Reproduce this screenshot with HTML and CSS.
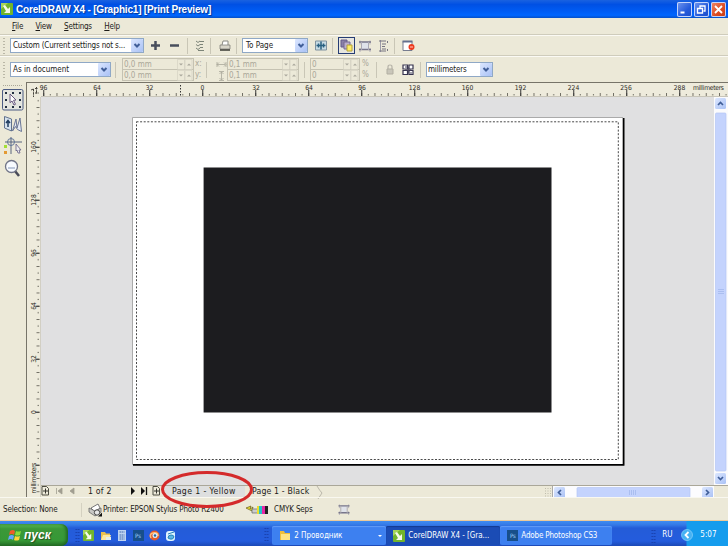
FILE: index.html
```html
<!DOCTYPE html>
<html lang="en">
<head>
<meta charset="utf-8">
<title>CorelDRAW X4 - [Graphic1] [Print Preview]</title>
<link rel="stylesheet" href="styles.css">
</head>
<body>
<svg width="0" height="0" class="defs">
  <defs>
    <linearGradient id="arrowBg" x1="0" y1="0" x2="1" y2="1"><stop offset="0" stop-color="#dce7ff"/><stop offset="1" stop-color="#a9c1f5"/></linearGradient>
    <symbol id="corel" viewBox="0 0 12 12"><rect width="12" height="12" rx="1" fill="#72b52c"/><path d="M0 0h7L0 6z" fill="#a6d45c"/><path d="M2 3l2-1 3 4 2-2v6H3l2-2z" fill="#f4faea"/></symbol>
    <symbol id="down" viewBox="0 0 12 13"><rect width="12" height="13" rx="1" fill="url(#arrowBg)"/><path d="M3.500 5l2.500 2.500L8.500 5" fill="none" stroke="#405e98" stroke-width="2"/></symbol>
    <symbol id="spin" viewBox="0 0 16 22"><g fill="#ece9d8" stroke="#d2cfc0" stroke-width=".6"><path d="M.5.5h7v10h-7zM8 .5h7v10H8zM.5 11.500h7v10h-7zM8 11.500h7v10H8z"/></g><path d="M2 4.500h4l-2 2zM10 6.500h4l-2-2zM2 15.500h4l-2 2zM10 17.500h4l-2-2z" fill="#aaa79c"/></symbol>
    <symbol id="frame" viewBox="0 0 12 12"><path d="M3 2h6v8H3z" fill="#dfe2ea"/><path d="M1 .5v4M11 .5v4M1 8v4M11 8v4" stroke="#b5b2ba" fill="none"/><path d="M0 2h12M0 9.500h12" stroke="#77758a" stroke-width="1.500" fill="none"/><path d="M2.500 2v8M9.500 2v8" stroke="#aaa8b4" fill="none"/></symbol>
    <symbol id="pageplus" viewBox="0 0 8 10"><path d="M.5.5h4.500l2 2v6.500H.5z" fill="#efecdc" stroke="#4c4c42"/><path d="M4 2.500v5M1.500 5h5" stroke="#34342e"/></symbol>
    <pattern id="tx" x="43.250" y="0" width="13.250" height="14" patternUnits="userSpaceOnUse"><path d="M.5 10v3M7 11v1.500" stroke="#4f4d44" stroke-width=".8"/></pattern>
    <pattern id="txm" x="43.250" y="0" width="53" height="14" patternUnits="userSpaceOnUse"><path d="M.5 7v6" stroke="#333"/></pattern>
    <pattern id="ty" x="0" y="49.750" width="14" height="13.250" patternUnits="userSpaceOnUse"><path d="M9.500 .5h3M10.500 7h1.500" stroke="#4f4d44" stroke-width=".8"/></pattern>
    <pattern id="tym" x="0" y="49.750" width="14" height="53" patternUnits="userSpaceOnUse"><path d="M8.500 .5h4" stroke="#333"/></pattern>
  </defs>
</svg>

<header class="titlebar">
  <svg width="12" height="12"><use href="#corel"/></svg>
  <h1>CorelDRAW X4 - [Graphic1] [Print Preview]</h1>
  <svg class="wbtn" width="15" height="15"><path d="M3.500 10.500h4" stroke="#fff" stroke-width="2"/></svg>
  <svg class="wbtn" width="15" height="15"><path d="M6 6V4h5v5H9.500M3.500 6.500h5v4.500h-5z" stroke="#fff" fill="none" stroke-width="1.300"/></svg>
  <svg class="wbtn close" width="15" height="15"><path d="M4 4l7 7M11 4l-7 7" stroke="#fff" stroke-width="1.800"/></svg>
</header>

<nav class="menu"><span><u>F</u>ile</span><span><u>V</u>iew</span><span><u>S</u>ettings</span><span><u>H</u>elp</span></nav>

<div class="bar bar1">
  <i class="grip"></i>
  <div class="combo"><span class="tight">Custom (Current settings not s...</span><svg width="12" height="13"><use href="#down"/></svg></div>
  <svg width="11" height="11"><path d="M5.500 1v9M1 5.500h9" stroke="#484e5c" stroke-width="2.500"/></svg>
  <svg width="11" height="11"><path d="M1 5.500h9" stroke="#484e5c" stroke-width="2.500"/></svg>
  <i class="sep"></i>
  <svg width="11" height="12"><path d="M1 1l2 1.500L5 1M1 4.500L3 6l2-1.500M1 8l2 1.500L5 8M5 1.500h4M5 4.500h3M5 7.500h3M3 10.500h6" stroke="#7c8478" fill="none"/></svg>
  <i class="sep"></i>
  <svg width="12" height="12"><path d="M3 5l1-4h5v4" fill="#fff" stroke="#8b8b86"/><path d="M1 5h10v4H1z" fill="#d8d5c9" stroke="#777770" stroke-width=".7"/><path d="M1 10h10" stroke="#44443e" stroke-width="1.600"/></svg>
  <i class="sep"></i>
  <div class="combo"><span>To Page</span><svg width="12" height="13"><use href="#down"/></svg></div>
  <svg width="12" height="11"><path d="M.5 1h11v9H.5z" fill="#c8dce4" stroke="#7f929f"/><path d="M1.500 5.500h9M6 1.500v8M3.500 3.500v4M8.500 3.500v4" stroke="#286080" stroke-width="1.500"/></svg>
  <i class="sep"></i>
  <svg class="active" width="17" height="17"><rect x=".5" y=".5" width="16" height="16" fill="#e7e6df" stroke="#263d75"/><path d="M3 3h6v7H3z" fill="#8a80a8" stroke="#655b8a"/><path d="M6 5h6v7H6z" fill="#bcaecd" stroke="#756991"/><path d="M9 8h5v6H9z" fill="#ffed67" stroke="#b3a036"/></svg>
  <svg width="12" height="12"><use href="#frame"/></svg>
  <svg width="10" height="12"><path d="M1.500 0v12" stroke="#9d9ba8"/><path d="M0 1h7M0 11h7M3 4h4M3 6.500h3M3 9h4M8.500 1v2M8.500 9v2" stroke="#777581" fill="none"/></svg>
  <i class="sep"></i>
  <svg width="13" height="12"><path d="M1 1.500h9v9H1z" fill="#fff" stroke="#777d90"/><path d="M.5 1.500h10" stroke="#64708f" stroke-width="2"/><circle cx="9.500" cy="7" r="3" fill="#ed3b20"/><path d="M8 7h3" stroke="#ffd0c4"/></svg>
</div>

<div class="bar bar2">
  <i class="grip"></i>
  <div class="combo"><span>As in document</span><svg width="12" height="13"><use href="#down"/></svg></div>
  <i class="sep"></i>
  <div class="pair"><span>0,0 mm</span><span>0,0 mm</span><svg width="16" height="22"><use href="#spin"/></svg></div>
  <div class="lbl"><span>x:</span><span>y:</span></div>
  <i class="sep"></i>
  <svg width="11" height="22"><path d="M1 5.500h8M3 3.500l-2 2 2 2M8 3.500l2 2-2 2M1 3v5M10 3v5M5.500 13v8M3.500 15l2-2 2 2M3.500 19l2 2 2-2M3 12.500h5M3 21.500h5" stroke="#aaa79a" fill="none" stroke-width=".8"/></svg>
  <div class="pair"><span>0,1 mm</span><span>0,1 mm</span><svg width="16" height="22"><use href="#spin"/></svg></div>
  <i class="sep"></i>
  <div class="pair"><span>0</span><span>0</span><svg width="16" height="22"><use href="#spin"/></svg></div>
  <div class="lbl"><span>%</span><span>%</span></div>
  <i class="sep"></i>
  <svg width="8" height="11"><path d="M2 5V3q0-2 2-2t2 2v2" fill="none" stroke="#b7b4a9" stroke-width="1.200"/><path d="M1 5h6v5H1z" fill="#c9c6ba" stroke="#b2afa2"/></svg>
  <svg width="12" height="12"><path d="M1 1h4.500v4H1zM7 1h4v4H7zM1 6.500h4.500v4H1zM7 6.500h4v4H7z" fill="#fff" stroke="#35334e" stroke-width="1.200"/><path d="M3 6h6M6.200 3v6M3 3h2M8 9h2" fill="none" stroke="#45425a"/></svg>
  <i class="sep"></i>
  <div class="combo"><span class="tight">millimeters</span><svg width="12" height="13"><use href="#down"/></svg></div>
</div>

<main class="work">
  <aside class="tools">
    <svg width="26" height="95">
      <path d="M3 3.500h20" stroke="#aaa797" stroke-dasharray="1 1"/>
      <rect x="2.500" y="7.500" width="20.500" height="20.500" rx="1.500" fill="#e4e5e0" stroke="#4c5c84"/>
      <path d="M5 11h2m5 0h2m5 0h2M5 18h2m12 0h2M5 25h2m5 0h2m5 0h2" stroke="#222f42" stroke-width="2"/>
      <path d="M10 12l6 6-2.500.3 2 4-1.500.7-2-4-2 1.700z" fill="#fff" stroke="#68577f"/>
      <path d="M4.500 34.500l7 2.500v12l-7-3z" fill="#d6e2ee" stroke="#60718c"/>
      <path d="M12.500 49l3.500-12 1 9 3-10 1.500 13.500-4-2-2-3z" fill="#e4eaf4" stroke="#6a7696"/>
      <path d="M8 45v-6M6 41l2-2.500 2 2.500" stroke="#213e60" fill="none" stroke-width="1.500"/>
      <path d="M5 60h17M11 55v17" stroke="#59657e"/><circle cx="11" cy="60" r="3.500" fill="none" stroke="#63789a"/>
      <path d="M4 63h3v3H4z" fill="#a2df35"/><path d="M4 69h3v3H4z" fill="#e39a34"/><path d="M16 62l5 6-2 0 1 3-2 0-1-3-1 1z" fill="#eee" stroke="#655e87" stroke-width=".8"/>
      <path d="M15 89l4 5" stroke="#484a58" stroke-width="2.500"/><circle cx="11.500" cy="84.500" r="6" fill="#f7faff" stroke="#707487" stroke-width="1.300"/><path d="M8 86h7" stroke="#bdc8db" stroke-width="2"/>
    </svg>
  </aside>
  <div class="editor">
    <svg class="hruler" width="701" height="14" viewBox="27 0 701 14">
      <path d="M41 0h687v14H41z" fill="url(#tx)"/><path d="M41 0h687v14H41z" fill="url(#txm)"/>
      <path d="M41 13.500h687" stroke="#c8c5b9"/>
      <path d="M180.500 2v11" stroke="#333" stroke-dasharray="1.500 1.500"/>
      <path d="M33.500 15V6M36.500 4v7M31 14.500h5M31 7l2.500-1M35 10h4M35 5.500h3" stroke="#44423b" stroke-dasharray="2.500 .8"/>
      <g class="ticktext"><text x="43.500" y="7">96</text><text x="97" y="7">64</text><text x="149.500" y="7">32</text><text x="202.500" y="7">0</text><text x="256" y="7">32</text><text x="309" y="7">64</text><text x="362" y="7">96</text><text x="414.500" y="7">128</text><text x="467.500" y="7">160</text><text x="520.500" y="7">192</text><text x="573.500" y="7">224</text><text x="626" y="7">256</text><text x="679.500" y="7">288</text><text x="708.500" y="7" textLength="31">millimeters</text></g>
    </svg>
    <div class="stage">
      <svg class="vruler" width="14" height="400" viewBox="0 0 14 400">
        <path d="M0 0h14v400H0z" fill="url(#ty)"/><path d="M0 0h14v400H0z" fill="url(#tym)"/><path d="M13.500 0v400" stroke="#d2cfc3"/>
        <g class="ticktext"><text transform="translate(8.500 50)rotate(-90)">160</text><text transform="translate(8.500 103)rotate(-90)">128</text><text transform="translate(8.500 156)rotate(-90)">96</text><text transform="translate(8.500 209)rotate(-90)">64</text><text transform="translate(8.500 262)rotate(-90)">32</text><text transform="translate(8.500 315)rotate(-90)">0</text><text transform="translate(8.500 381)rotate(-90)" textLength="31">millimeters</text></g>
      </svg>
      <svg class="canvas" width="673" height="388" viewBox="41 97 673 388">
        <path d="M132.500 465V117.500H623" fill="none" stroke="#aaa"/>
        <path d="M133 118h490v347H133z" fill="#fff"/>
        <path d="M623.600 118v347.300M133 464.900h491.400" stroke="#000" stroke-width="1.800"/>
        <rect x="136.500" y="121.800" width="481.800" height="337.700" fill="none" stroke="#333" stroke-width=".9" stroke-dasharray="2 1.600"/>
        <path d="M203.600 167.600h347.900v244.900H203.600z" fill="#1c1c1f"/>
      </svg>
      <svg class="vscroll" width="14" height="388">
        <rect width="14" height="388" fill="#fbfbfd"/>
        <rect x="1" y="1" width="11" height="11" rx="1.500" fill="url(#arrowBg)"/><path d="M4 8l2.500-2.500L9 8" fill="none" stroke="#405e98" stroke-width="1.700"/>
        <rect x="1.500" y="16" width="10.500" height="358" rx="1" fill="#c4d3fd" stroke="#b4c6f3" stroke-width=".7"/>
        <path d="M4 192.500h6M4 194.500h6M4 196.500h6" stroke="#9fb5ea" stroke-width=".7"/>
        <rect x="1" y="376" width="11" height="11" rx="1.500" fill="url(#arrowBg)"/><path d="M4 380l2.500 2.500L9 380" fill="none" stroke="#405e98" stroke-width="1.700"/>
      </svg>
      <div class="pages">
        <svg width="9" height="10"><use href="#pageplus"/></svg>
        <svg class="nav" width="28" height="8"><path d="M6.500 1v6M12 1v6L8 4zM24 1v6l-4-3z" fill="#a19e91" stroke="#a19e91" stroke-width=".8"/></svg>
        <span class="count">1 of 2</span>
        <svg class="nav" width="26" height="8"><path d="M5 0v8l4-4zM15 0v8l4-4z" fill="#111"/><path d="M20.500 0v8" stroke="#111" stroke-width="1.300"/></svg>
        <svg width="9" height="10"><use href="#pageplus"/></svg>
        <div class="tab yellow"><span>Page 1 - Yellow</span>
          <svg class="ring" width="96" height="39"><ellipse cx="48" cy="19.500" rx="44.500" ry="17" fill="none" stroke="#d42a2b" stroke-width="3"/></svg>
        </div>
        <div class="tab"><span>Page 1 - Black</span></div>
        <svg class="slant" width="10" height="13"><path d="M1 0q3 5 5 7l-4 6" fill="none" stroke="#bab7aa"/></svg>
        <svg class="hscroll" width="177" height="13" viewBox="-8 0 177 13">
          <path d="M-6.500 2v9M-4 2v9M-1.500 2v9" stroke="#bfbcac" stroke-dasharray="1 1.500"/>
          <rect width="162" height="12" fill="#fcfcfe"/><path d="M.5 0v12" stroke="#aaa"/>
          <rect x="2" y="1" width="11" height="11" rx="1.500" fill="url(#arrowBg)"/><path d="M9 4L6.500 6.500 9 9" fill="none" stroke="#405e98" stroke-width="1.700"/>
          <rect x="25" y="1.500" width="113" height="10" rx="1" fill="#c4d3fd" stroke="#b4c6f3" stroke-width=".7"/>
          <path d="M77.500 4v5M79.500 4v5M81.500 4v5M83.500 4v5" stroke="#9fb5ea" stroke-width=".7"/>
          <rect x="150" y="1" width="11" height="11" rx="1.500" fill="url(#arrowBg)"/><path d="M154 4l2.500 2.500L154 9" fill="none" stroke="#405e98" stroke-width="1.700"/>
        </svg>
      </div>
    </div>
  </div>
</main>

<footer class="status">
  <span>Selection: None</span><i></i>
  <svg width="15" height="14"><path d="M3 5l7-4 2 4-5 4z" fill="#fff" stroke="#777"/><path d="M1 5l6 3 6-3v4l-6 4-6-4z" fill="#c8c8c5" stroke="#666" stroke-width=".8"/><circle cx="9" cy="9.500" r="2.700" fill="#e6e6e6" stroke="#444"/><path d="M14 9.500v4h-4z" fill="#111"/></svg>
  <span class="printer">Printer: EPSON Stylus Photo R2400</span>
  <svg width="24" height="10"><path d="M1 3l5-2-1 3 3-2-1 4z" fill="#eadd35" stroke="#665b20" stroke-width=".7"/><path d="M7 4h6v4H7z" fill="#ccc" stroke="#666" stroke-width=".7"/><path d="M12 1h3v8h-3z" fill="#eede28"/><path d="M14 1h3v8h-3z" fill="#22c4cd"/><path d="M17 1h3v8h-3z" fill="#e829a5"/><path d="M20 1h3v8h-3z" fill="#222"/></svg>
  <span class="cmyk">CMYK Seps</span>
  <svg width="12" height="11"><use href="#frame"/></svg>
</footer>

<footer class="taskbar">
  <div class="start"><svg width="13" height="13"><path d="M2 2q3-2 5 0L6 6Q4 4 1 6z" fill="#f15b2a"/><path d="M8 2q2 1 5 0l-1 4q-3 1-5 0z" fill="#8bdc3d"/><path d="M1 7q3-2 5 0l-1 4q-2-2-5 0z" fill="#65a5ff"/><path d="M7 7q2 1 5 0l-1 4q-3 1-5 0z" fill="#ffd43a"/></svg><b>пуск</b></div>
  <div class="quick">
    <i class="dots"></i>
    <svg width="11" height="11"><use href="#corel"/></svg>
    <svg width="11" height="11"><path d="M1 2h4l1 1.500h4V10H1z" fill="#edc14f"/><path d="M3 5h8l-2 5H1z" fill="#ffe9a0"/><path d="M6 7h5v3H6z" fill="#e5eeee"/></svg>
    <svg width="11" height="11"><path d="M2 0h8v11H2z" fill="#bed3f1"/><path d="M3.500 2h5M3.500 5h5M3.500 7h5M3.500 9h5" stroke="#446dae" stroke-dasharray="1.500 .5"/></svg>
    <div class="ps">Ps</div>
    <svg width="11" height="11"><circle cx="5.500" cy="5.500" r="5" fill="#e55b28"/><path d="M2 8Q0 4 4 3q5-1 5 3" fill="none" stroke="#ffc17a" stroke-width="1.500"/><circle cx="6" cy="5.500" r="2.500" fill="#d8edff"/><circle cx="6" cy="5.500" r="1.200" fill="#23659b"/></svg>
    <svg width="11" height="11"><rect x="1" y="1" width="9" height="10" rx="3" fill="#dff4ff"/><path d="M3 4l6-2M3 8q0-3 3-3t3 2q-1 3-4 2z" fill="#5bb5e4" stroke="#2783b9"/></svg>
  </div>
  <i class="dots"></i>
  <div class="task t1"><svg width="12" height="11"><path d="M1 1h4l1 2h5v7H1z" fill="#efbe3c"/><path d="M2 4h9v6H2z" fill="#ffe382"/></svg><span>2 Проводник</span><em></em></div>
  <div class="task t2"><svg width="12" height="12"><use href="#corel"/></svg><span>CorelDRAW X4 - [Gra...</span></div>
  <div class="task t3"><div class="ps">Ps</div><span>Adobe Photoshop CS3</span></div>
  <i class="dots"></i>
  <span class="lang">RU</span>
  <div class="tray"><svg width="12" height="12"><circle cx="6" cy="6" r="5.500" fill="#46b2f3" stroke="#8bd4fc" stroke-width=".7"/><path d="M7.500 3L4.500 6l3 3" fill="none" stroke="#fff" stroke-width="1.800"/></svg><span>5:07</span></div>
</footer>
</body>
</html>
```
FILE: styles.css
```css
* { box-sizing: border-box; }
body { margin: 0; width: 728px; height: 546px; overflow: hidden; background: #ece9d8; color: #1c1b18; font: 8px/10px "DejaVu Sans Condensed", "DejaVu Sans", sans-serif; display: flex; flex-direction: column; }
svg { display: block; flex: none; }
span { white-space: nowrap; }
i, em { flex: none; }
.defs { position: absolute; }

.titlebar { height: 18px; flex: none; display: flex; align-items: center; gap: 2px; padding: 0 2px 0 1px; background: linear-gradient(#1a62e0, #0050e4 25%, #005df5 65%, #0066ff 85%, #0650c8); }
.titlebar h1 { margin: 0 auto 0 1px; padding-top: 1px; color: #fff; font: bold 10px/17px "Liberation Sans", Arial, sans-serif; letter-spacing: -.19px; text-shadow: 1px 1px 1px #063896; }
.wbtn { border-radius: 2px; background: linear-gradient(135deg, #7398ef, #245adb 60%, #1d4dc6); box-shadow: inset 0 0 0 1px #c4d5fb; }
.wbtn.close { background: linear-gradient(135deg, #ee8a6c, #dc4a20 60%, #c43c14); }

.menu { height: 17px; flex: none; display: flex; align-items: center; gap: 12.400px; padding: 2px 0 0 12px; border-bottom: 1px solid #cfccbc; letter-spacing: -.22px; }
.menu u { text-underline-offset: 1px; text-decoration-thickness: .7px; }

.bar { display: grid; align-items: center; flex: none; border-top: 1px solid #fbfaf4; }
.bar1 { height: 21px; border-bottom: 1px solid #cfccbc; grid-template-columns: 10px 140px 19px 18px 8px 15px 9px 17px 7px 72px 17px 6px 21px 20px 15px 8px 13px; }
.bar2 { height: 26px; grid-template-columns: 10px 105px 7px 72px 12px 10px 11px 77px 6px 51px 15px 10px 16px 18px 6px 68px; }
.grip { width: 2px; height: 16px; margin-left: 3px; background: repeating-linear-gradient(#bab7a7 0 1px, transparent 1px 3px); }
.sep { width: 1px; height: 16px; background: #c9c6b6; }
.combo { height: 15px; display: flex; align-items: center; justify-content: space-between; background: #fff; border: 1px solid #8fa8c6; padding-left: 2px; }
.combo span { padding-top: 1px; }
.bar1 .combo { width: 134px; }
.bar1 .combo ~ .combo { width: 66px; padding-left: 3px; margin-left: -1px; }
.bar2 .combo { width: 101px; }
.bar2 .combo:last-child { width: 67px; padding-left: 1px; }
.tight { letter-spacing: -.17px; }
.pair { width: 72px; height: 23px; display: grid; grid-template: 1fr 1fr / 1fr 16px; border: 1px solid #c5c2b2; background: linear-gradient(#c5c2b2, #c5c2b2) 0 50% / 100% 1px no-repeat; color: #aaa799; align-items: center; padding-left: 1px; }
.pair svg { grid-area: 1 / 2 / 3 / 3; }
.pair span:nth-child(2) { grid-row: 2; }
.sep + .pair:nth-child(10) { width: 50px; }
.lbl { display: grid; grid-template-rows: 11px 11px; color: #aaa799; padding-left: 1px; }

.work { display: flex; height: 415px; flex: none; }
.tools { width: 26px; }
.editor { flex: 1; border-top: 1px solid #777469; border-left: 1px solid #777469; }
.hruler { background: #eeebdc; overflow: visible; }
.ticktext { font-size: 6.700px; fill: #292821; text-anchor: middle; }
.stage { display: grid; grid-template: 388px 12px / 14px 673px 14px; }
.vruler { grid-row: 1 / 3; background: #eeebdc; }
.canvas { background: #e0e0e1; }
.pages { grid-column: 2 / 4; display: flex; align-items: flex-start; border-top: 1px solid #aaa799; height: 12px; font-size: 8.700px; line-height: 11px; }
.nav { margin-top: 1px; }
.count { width: 38px; margin-left: 10px; letter-spacing: .2px; }
.tab { position: relative; height: 11px; line-height: 11px; padding: 0 7px; letter-spacing: .15px; }
.yellow { margin-left: 3px; background: #dedfdf; padding-left: 8px; width: 81px; letter-spacing: .38px; }
.ring { position: absolute; left: -5px; top: -16px; z-index: 2; }
.hscroll { margin-left: auto; margin-right: 7px; }

.status { height: 24px; flex: none; display: flex; align-items: center; padding: 1px 0 0 3px; border-top: 1px solid #f9f8f0; border-bottom: 1px solid #eac99b; letter-spacing: -.15px; }
.status > span { padding-top: 1px; }
.status > span:first-child { width: 78px; }
.status i { width: 1px; height: 14px; background: #d4d1c1; margin-right: 6px; }
.printer { width: 142px; }
.cmyk { width: 64px; margin-left: 5px; }

.taskbar { height: 25px; flex: none; display: flex; align-items: center; color: #fff; background: linear-gradient(#3f8cf1 0, #3478e6 4px, #245cd8 7px, #245cdd 80%, #1c49b6); }
.start { width: 68px; height: 22px; align-self: flex-end; display: flex; align-items: center; gap: 3px; padding-left: 8px; border-radius: 0 7px 7px 0; background: linear-gradient(#5dba54, #3b9838 22%, #369836 75%, #246c25); box-shadow: inset -2px 0 3px #216821; }
.start b { font: italic bold 12px/20px "Liberation Sans", Arial, sans-serif; text-shadow: 1px 1px 1px #244d20; }
.dots { width: 5px; height: 14px; background: radial-gradient(circle, #173fab 40%, transparent 45%) 0 0 / 2.500px 3px; }
.quick { display: flex; align-items: center; gap: 5.400px; margin: 3px 88px 0 7px; }
.quick .dots { margin-right: -2px; }
.ps { width: 11px; height: 11px; background: #174f8a; color: #a5d4ff; font-size: 6px; line-height: 11px; text-align: center; }
.task { height: 19px; margin-top: 4px; display: flex; align-items: center; gap: 3px; padding-left: 7px; border-radius: 2px; background: #3d80f0; box-shadow: inset 0 1px 1px #619bf7; letter-spacing: -.05px; }
.t1 { width: 114px; margin-left: 3px; }
.t1 em { margin-left: auto; margin-right: 4px; border: 2px solid transparent; border-top-color: #fff; border-bottom: 0; }
.t2 { width: 114px; background: #1b4cb5; box-shadow: inset 0 1px 1px #133b91; }
.t3 { width: 112px; letter-spacing: -.18px; }
.t3 + .dots { margin: 4px 6px 0 39px; }
.lang { width: 19px; margin-top: 3px; }
.tray { height: 25px; flex: 1; display: flex; align-items: center; gap: 7px; padding-top: 3px; background: linear-gradient(90deg, transparent 0 5px, #159ced 6px); font-size: 8px; }
```
